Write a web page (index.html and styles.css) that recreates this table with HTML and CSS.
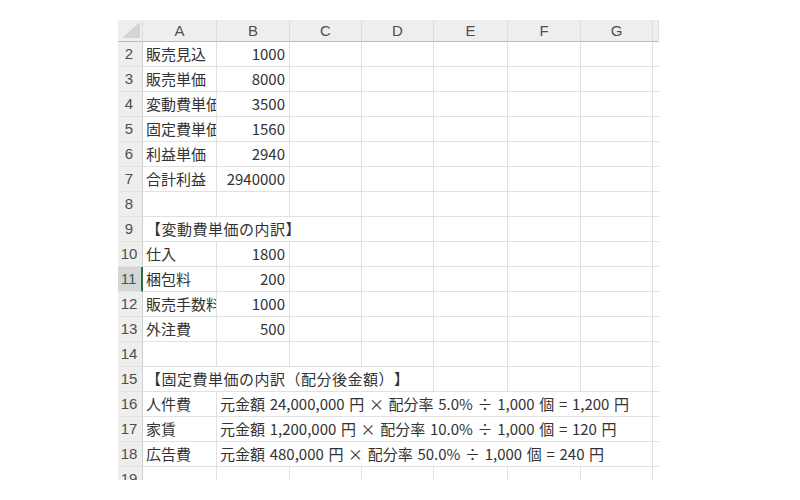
FILE: index.html
```html
<!DOCTYPE html>
<html lang="ja">
<head>
<meta charset="utf-8">
<title>Sheet</title>
<link rel="stylesheet" href="styles.css">
</head>
<body>
<div class="sheet">
  <div class="row head">
    <div class="corner"><span class="tri"></span></div>
    <div class="ch">A</div><div class="ch">B</div><div class="ch">C</div><div class="ch">D</div><div class="ch">E</div><div class="ch">F</div><div class="ch">G</div><div class="ch"></div>
  </div>

  <div class="row"><div class="rh">2</div><div class="c">販売見込</div><div class="c num">1000</div><div class="c"></div><div class="c"></div><div class="c"></div><div class="c"></div><div class="c"></div><div class="c"></div></div>
  <div class="row"><div class="rh">3</div><div class="c">販売単価</div><div class="c num">8000</div><div class="c"></div><div class="c"></div><div class="c"></div><div class="c"></div><div class="c"></div><div class="c"></div></div>
  <div class="row"><div class="rh">4</div><div class="c">変動費単価</div><div class="c num">3500</div><div class="c"></div><div class="c"></div><div class="c"></div><div class="c"></div><div class="c"></div><div class="c"></div></div>
  <div class="row"><div class="rh">5</div><div class="c">固定費単価</div><div class="c num">1560</div><div class="c"></div><div class="c"></div><div class="c"></div><div class="c"></div><div class="c"></div><div class="c"></div></div>
  <div class="row"><div class="rh">6</div><div class="c">利益単価</div><div class="c num">2940</div><div class="c"></div><div class="c"></div><div class="c"></div><div class="c"></div><div class="c"></div><div class="c"></div></div>
  <div class="row"><div class="rh">7</div><div class="c">合計利益</div><div class="c num">2940000</div><div class="c"></div><div class="c"></div><div class="c"></div><div class="c"></div><div class="c"></div><div class="c"></div></div>
  <div class="row"><div class="rh">8</div><div class="c"></div><div class="c"></div><div class="c"></div><div class="c"></div><div class="c"></div><div class="c"></div><div class="c"></div><div class="c"></div></div>
  <div class="row"><div class="rh">9</div><div class="c span3 title">【変動費単価の内訳】</div><div class="c"></div><div class="c"></div><div class="c"></div><div class="c"></div><div class="c"></div></div>
  <div class="row"><div class="rh">10</div><div class="c">仕入</div><div class="c num">1800</div><div class="c"></div><div class="c"></div><div class="c"></div><div class="c"></div><div class="c"></div><div class="c"></div></div>
  <div class="row"><div class="rh sel">11</div><div class="c">梱包料</div><div class="c num">200</div><div class="c"></div><div class="c"></div><div class="c"></div><div class="c"></div><div class="c"></div><div class="c"></div></div>
  <div class="row"><div class="rh">12</div><div class="c">販売手数料</div><div class="c num">1000</div><div class="c"></div><div class="c"></div><div class="c"></div><div class="c"></div><div class="c"></div><div class="c"></div></div>
  <div class="row"><div class="rh">13</div><div class="c">外注費</div><div class="c num">500</div><div class="c"></div><div class="c"></div><div class="c"></div><div class="c"></div><div class="c"></div><div class="c"></div></div>
  <div class="row"><div class="rh">14</div><div class="c"></div><div class="c"></div><div class="c"></div><div class="c"></div><div class="c"></div><div class="c"></div><div class="c"></div><div class="c"></div></div>
  <div class="row"><div class="rh">15</div><div class="c span4 title">【固定費単価の内訳（配分後金額）】</div><div class="c"></div><div class="c"></div><div class="c"></div><div class="c"></div></div>
  <div class="row"><div class="rh">16</div><div class="c">人件費</div><div class="c span6 formula">元金額 24,000,000 円 × 配分率 5.0% ÷ 1,000 個 = 1,200 円</div><div class="c"></div></div>
  <div class="row"><div class="rh">17</div><div class="c">家賃</div><div class="c span6 formula">元金額 1,200,000 円 × 配分率 10.0% ÷ 1,000 個 = 120 円</div><div class="c"></div></div>
  <div class="row"><div class="rh">18</div><div class="c">広告費</div><div class="c span6 formula">元金額 480,000 円 × 配分率 50.0% ÷ 1,000 個 = 240 円</div><div class="c"></div></div>
  <div class="row"><div class="rh">19</div><div class="c"></div><div class="c"></div><div class="c"></div><div class="c"></div><div class="c"></div><div class="c"></div><div class="c"></div><div class="c"></div></div>
</div>
</body>
</html>
```

FILE: styles.css
```css
html, body {
  margin: 0;
  padding: 0;
  background: #ffffff;
}

body {
  padding: 20px 0 0 118px;
  font-family: "Noto Sans CJK JP", "Noto Sans", sans-serif;
  color: #333333;
}

.sheet {
  width: 541px;
  height: 460px;
  overflow: hidden;
  font-size: 15px;
  text-spacing-trim: space-all;
}

.row {
  display: grid;
  grid-template-columns: 25px 74px 73px 72px 72px 74px 73px 72px 6px;
  height: 25px;
}

.row.head {
  height: 22px;
}

.row > div {
  box-sizing: border-box;
  border-right: 1px solid #e1e1e1;
  border-bottom: 1px solid #e1e1e1;
  white-space: nowrap;
  overflow: hidden;
  line-height: 24px;
  background: #ffffff;
}

.head > div {
  background: #eeeeee;
  border-right: 1px solid #dcdcdc;
  border-bottom: 1px solid #bcbcbc;
  color: #4f4f4f;
  font-family: "Liberation Sans", "Noto Sans", sans-serif;
  font-size: 15px;
  line-height: 21px;
  text-align: center;
}

.corner {
  position: relative;
}

.tri {
  position: absolute;
  right: 2px;
  bottom: 3px;
  width: 18px;
  height: 16px;
  background: #d4d4d4;
  clip-path: polygon(100% 0, 100% 100%, 0 100%);
}

.row > .rh {
  background: #eeeeee;
  border-right: 1px solid #cfcfcf;
  border-bottom: 1px solid #e1e1e1;
  color: #4f4f4f;
  text-align: center;
  font-family: "Liberation Sans", "Noto Sans", sans-serif;
  padding-right: 2px;
}

.row > .rh.sel {
  background: #d6d6d6;
  color: #1e6b45;
  border-right: 2px solid #217346;
}

.c {
  padding: 0 3px;
}

.num {
  text-align: right;
  padding-right: 4px;
}

.title {
  letter-spacing: 0.5px;
}

.formula {
  word-spacing: 1.3px;
}

.span3 { grid-column: span 3; }
.span4 { grid-column: span 4; }
.span6 { grid-column: span 6; }
```
